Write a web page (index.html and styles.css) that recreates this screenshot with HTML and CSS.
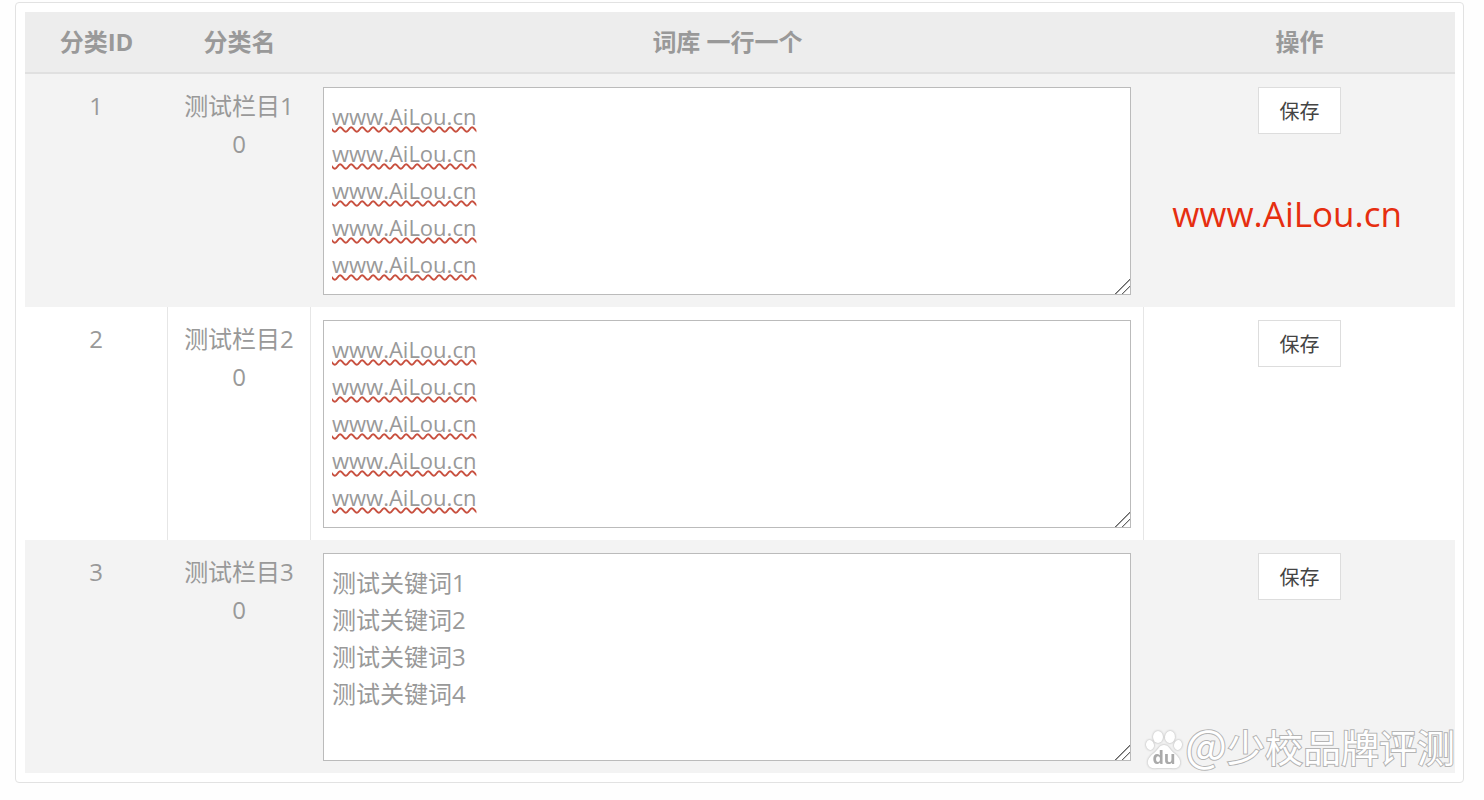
FILE: index.html
```html
<!DOCTYPE html>
<html lang="zh-CN">
<head>
  <meta charset="UTF-8" />
  <title>词库管理</title>
  <link rel="stylesheet" href="styles.css">
</head>
<body>
  <div class="panel">
    <table class="list">
      <colgroup>
        <col class="col-id">
        <col class="col-name">
        <col>
        <col class="col-action">
      </colgroup>
      <thead>
        <tr>
          <th>分类ID</th>
          <th>分类名</th>
          <th>词库 一行一个</th>
          <th>操作</th>
        </tr>
      </thead>
      <tbody>
        <tr>
          <td>1</td>
          <td><label for="words1">测试栏目1</label><br>0</td>
          <td><textarea id="words1" class="wavy" spellcheck="false">www.AiLou.cn
www.AiLou.cn
www.AiLou.cn
www.AiLou.cn
www.AiLou.cn</textarea></td>
          <td><button type="button">保存</button></td>
        </tr>
        <tr>
          <td>2</td>
          <td><label for="words2">测试栏目2</label><br>0</td>
          <td><textarea id="words2" class="wavy" spellcheck="false">www.AiLou.cn
www.AiLou.cn
www.AiLou.cn
www.AiLou.cn
www.AiLou.cn</textarea></td>
          <td><button type="button">保存</button></td>
        </tr>
        <tr>
          <td>3</td>
          <td><label for="words3">测试栏目3</label><br>0</td>
          <td><textarea id="words3" spellcheck="false">测试关键词1
测试关键词2
测试关键词3
测试关键词4</textarea></td>
          <td><button type="button">保存</button></td>
        </tr>
      </tbody>
    </table>

    <div class="site-mark">www.AiLou.cn</div>

    <div class="author-mark">
      <svg class="paw" viewBox="0 0 36 40" aria-hidden="true">
        <ellipse cx="4" cy="15" rx="4" ry="5" transform="rotate(-12 4 15)" />
        <ellipse cx="12" cy="7" rx="5" ry="6" />
        <ellipse cx="24" cy="7" rx="5" ry="6" transform="rotate(8 24 7)" />
        <ellipse cx="32" cy="15" rx="4" ry="5" transform="rotate(12 32 15)" />
        <path d="M18 15C13 15 12 20 8 23C4 26 1 30 2 34C3 38 7 39 11 38C16 38 20 38 25 38C30 39 33 38 34 34C35 30 32 26 28 23C24 20 23 15 18 15Z" />
        <text x="18" y="34">du</text>
      </svg>
      <span><span class="at">@</span>少校品牌评测</span>
    </div>
  </div>
</body>
</html>
```
FILE: styles.css
```css
* {
  box-sizing: border-box;
}
body {
  margin: 0;
  padding: 2px 20px 18px 15px;
  background-color: #fefefe;
  color: #999;
  font-family: "Open Sans", "Noto Sans CJK SC", sans-serif;
  font-size: 24px;
  line-height: 38px;
}
.panel {
  position: relative;
  padding: 9px 8px 9px 9px;
  border: 1px solid #e2e2e2;
  border-radius: 4px;
  background-color: #fff;
}
.list {
  width: 100%;
  table-layout: fixed;
  border-collapse: separate;
  border-spacing: 0;
}
.col-id, .col-name {
  width: 10%;
}
.col-action {
  width: 311px;
}
th {
  height: 62px;
  padding: 0;
  background-color: #ededed;
  border-bottom: 2px solid #e0e0e0;
}
td {
  padding: 13px 12px 12px;
  vertical-align: top;
  text-align: center;
  border-right: 1px solid #e6e6e6;
}
td:last-child {
  border-right: none;
}
tbody tr:nth-child(odd) td {
  background-color: #f3f3f3;
  border-right-color: #f3f3f3;
}
textarea {
  display: block;
  width: 100%;
  height: 208px;
  padding: 10px 8px;
  border: 1px solid #bbb;
  background-color: #fff;
  color: #999;
  font: inherit;
  line-height: 37px;
  overflow: hidden;
  resize: both;
}
textarea::-webkit-resizer {
  background: linear-gradient(135deg, transparent 47%, #666 48%, #666 53%, transparent 54%, transparent 70%, #666 71%, #666 76%, transparent 77%);
}
.wavy {
  font-size: 22px;
  text-decoration: underline wavy #c8503f 2px;
}
button {
  width: 83px;
  height: 47px;
  padding: 0;
  border: 1px solid #ddd;
  background-color: #fff;
  color: #444;
  font-family: inherit;
  font-size: 20px;
}
.site-mark {
  position: absolute;
  top: 187px;
  right: 61px;
  color: #e62e10;
  font-size: 35px;
  line-height: 48px;
}
.author-mark {
  position: absolute;
  right: 8px;
  bottom: 12px;
  display: flex;
  align-items: flex-end;
  gap: 3px;
  color: #fff;
  font-family: "Noto Sans CJK SC", sans-serif;
  font-size: 38px;
  line-height: 48px;
  -webkit-text-stroke: 2px #b4b4b4;
  paint-order: stroke fill;
}
.at {
  font-size: 44px;
}
.paw {
  width: 36px;
  height: 40px;
  overflow: visible;
  fill: #fff;
  filter: drop-shadow(0 0 1px #aaa);
  -webkit-text-stroke: 0;
}
.paw text {
  fill: #aaa;
  font-family: "Open Sans", sans-serif;
  font-size: 18px;
  font-weight: bold;
  text-anchor: middle;
}
```
